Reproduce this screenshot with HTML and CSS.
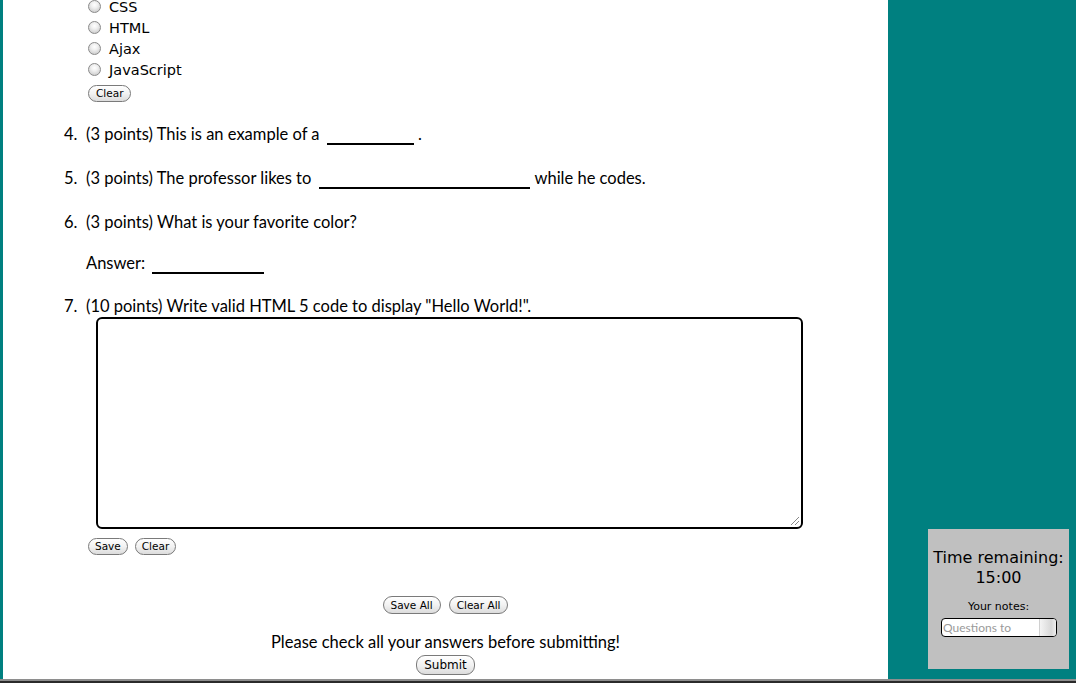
FILE: index.html
```html
<!DOCTYPE html>
<html>
<head>
<meta charset="utf-8">
<link rel="stylesheet" href="styles.css">
</head>
<body>
<div class="window">
  <main class="main">
    <div class="options">
      <label class="opt"><span class="radio"></span>CSS</label>
      <label class="opt"><span class="radio"></span>HTML</label>
      <label class="opt"><span class="radio"></span>Ajax</label>
      <label class="opt"><span class="radio"></span>JavaScript</label>
      <div class="btn-row first"><button class="btn">Clear</button></div>
    </div>
    <ol class="questions">
      <li class="q q4"><span class="num">4.</span><span class="txt">(3 points) This is an example of a <span class="blank b4"></span> .</span></li>
      <li class="q q5"><span class="num">5.</span><span class="txt">(3 points) The professor likes to <span class="blank b5"></span> while he codes.</span></li>
      <li class="q q6"><span class="num">6.</span><span class="txt">(3 points) What is your favorite color?</span></li>
      <li class="answer">Answer: <span class="blank b6"></span></li>
      <li class="q q7"><span class="num">7.</span><span class="txt">(10 points) Write valid HTML 5 code to display "Hello World!".</span></li>
      <li class="code"><div class="textarea"><span class="grip"></span></div></li>
      <li class="btn-row save-row"><button class="btn">Save</button><button class="btn">Clear</button></li>
    </ol>
    <div class="all-row"><button class="btn">Save All</button><button class="btn">Clear All</button></div>
    <p class="notice">Please check all your answers before submitting!</p>
    <div class="submit-row"><button class="btn submit">Submit</button></div>
  </main>
  <aside class="side">
    <div class="timer">
      <div class="time-label">Time remaining:</div>
      <div class="time-value">15:00</div>
      <div class="notes-label">Your notes:</div>
      <div class="notes"><span class="ph">Questions to</span><span class="scroll"></span></div>
    </div>
  </aside>
</div>
<div class="edge-light"></div>
<div class="edge-dark"></div>
</body>
</html>
```
FILE: styles.css
```css
html, body {
  margin: 0;
  padding: 0;
  height: 683px;
  overflow: hidden;
  background: #008080;
}
body {
  display: flex;
  flex-direction: column;
}
.window {
  display: flex;
  height: 679px;
  padding-left: 3px;
}
.main {
  width: 885px;
  background: #fff;
  overflow: hidden;
  font-family: "Lato", "Open Sans", sans-serif;
  font-size: 16.5px;
  color: #000;
}
.options {
  margin-top: -4px;
  padding-left: 85px;
}
.opt {
  display: flex;
  align-items: center;
  height: 21px;
  font-family: "DejaVu Sans", sans-serif;
  font-size: 14.5px;
}
.radio {
  width: 11px;
  height: 11px;
  border-radius: 50%;
  border: 1px solid #8a8a8a;
  background: radial-gradient(circle at 50% 35%, #fff 0%, #f0f0f0 35%, #c0c0c0 100%);
  margin-right: 8px;
  box-sizing: content-box;
}
.btn-row {
  display: flex;
  gap: 8px;
}
.btn-row.first {
  margin-top: 5px;
}
.btn {
  font-family: "DejaVu Sans", sans-serif;
  font-size: 10.5px;
  color: #000;
  height: 17px;
  padding: 0 7px;
  border: 1px solid #7a7a7a;
  border-radius: 9px;
  background: linear-gradient(#ffffff, #f2f2f2 50%, #dcdcdc);
  line-height: 15px;
  margin: 0;
}
.questions {
  list-style: none;
  margin: 21px 0 0 0;
  padding: 0 0 0 61px;
}
.q {
  display: flex;
  line-height: 22px;
  height: 22px;
}
.num {
  width: 22px;
  flex: none;
}
.q5, .q6 {
  margin-top: 22px;
}
.q7 {
  margin-top: 21px;
}
.answer {
  margin-top: 19px;
  padding-left: 22px;
  line-height: 22px;
  height: 22px;
}
.blank {
  display: inline-block;
  vertical-align: -5px;
  border-bottom: 2px solid #000;
  margin: 0 3px;
}
.b4 { width: 87px; margin-right: 0; }
.b5 { width: 211px; margin-right: 1px; }
.b6 { width: 112px; }
.code {
  padding-left: 32px;
}
.textarea {
  position: relative;
  width: 703px;
  height: 208px;
  border: 2px solid #000;
  border-radius: 6px;
  background: #fff;
}
.grip {
  position: absolute;
  right: 2px;
  bottom: 2px;
  width: 8px;
  height: 8px;
  background: linear-gradient(135deg, transparent 45%, #888 45%, #888 55%, transparent 55%, transparent 70%, #888 70%, #888 80%, transparent 80%);
}
.save-row {
  margin-top: 9px;
  padding-left: 24px;
  gap: 7px;
}
.save-row .btn {
  padding: 0 6px;
}
.all-row {
  display: flex;
  justify-content: center;
  gap: 8px;
  margin-top: 41px;
}
.all-row .btn {
  height: 18px;
}
.notice {
  text-align: center;
  margin: 17px 0 0 0;
  line-height: 22px;
}
.submit-row {
  display: flex;
  justify-content: center;
  margin-top: 2px;
}
.submit {
  height: 20px;
  font-size: 12px;
  padding: 0 7px;
  line-height: 18px;
}
.side {
  flex: 1;
  display: flex;
  flex-direction: column;
  justify-content: flex-end;
  padding: 0 7px 10px 40px;
}
.timer {
  height: 140px;
  background: #c0c0c0;
  font-family: "DejaVu Sans", sans-serif;
  text-align: center;
  padding-top: 18px;
  box-sizing: border-box;
}
.time-label, .time-value {
  font-size: 16px;
  line-height: 20px;
}
.time-label {
  margin-top: 1px;
}
.notes-label {
  font-size: 11px;
  margin-top: 12px;
  line-height: 14px;
}
.notes {
  display: flex;
  width: 114px;
  height: 17px;
  margin: 4px 0 0 13px;
  border: 1px solid #000;
  border-radius: 4px;
  background: #fff;
  overflow: hidden;
  text-align: left;
}
.ph {
  flex: 1;
  font-family: "Lato", "Open Sans", sans-serif;
  font-size: 12px;
  color: #9a9a9a;
  line-height: 17px;
  padding-left: 1px;
}
.scroll {
  width: 16px;
  background: linear-gradient(90deg, #f4f4f4, #d8d8d8 70%, #eeeeee);
  border-left: 1px solid #d0d0d0;
}
.edge-light {
  height: 2px;
  background: #8e8e8e;
}
.edge-dark {
  height: 2px;
  background: #2a2a2a;
}
```
